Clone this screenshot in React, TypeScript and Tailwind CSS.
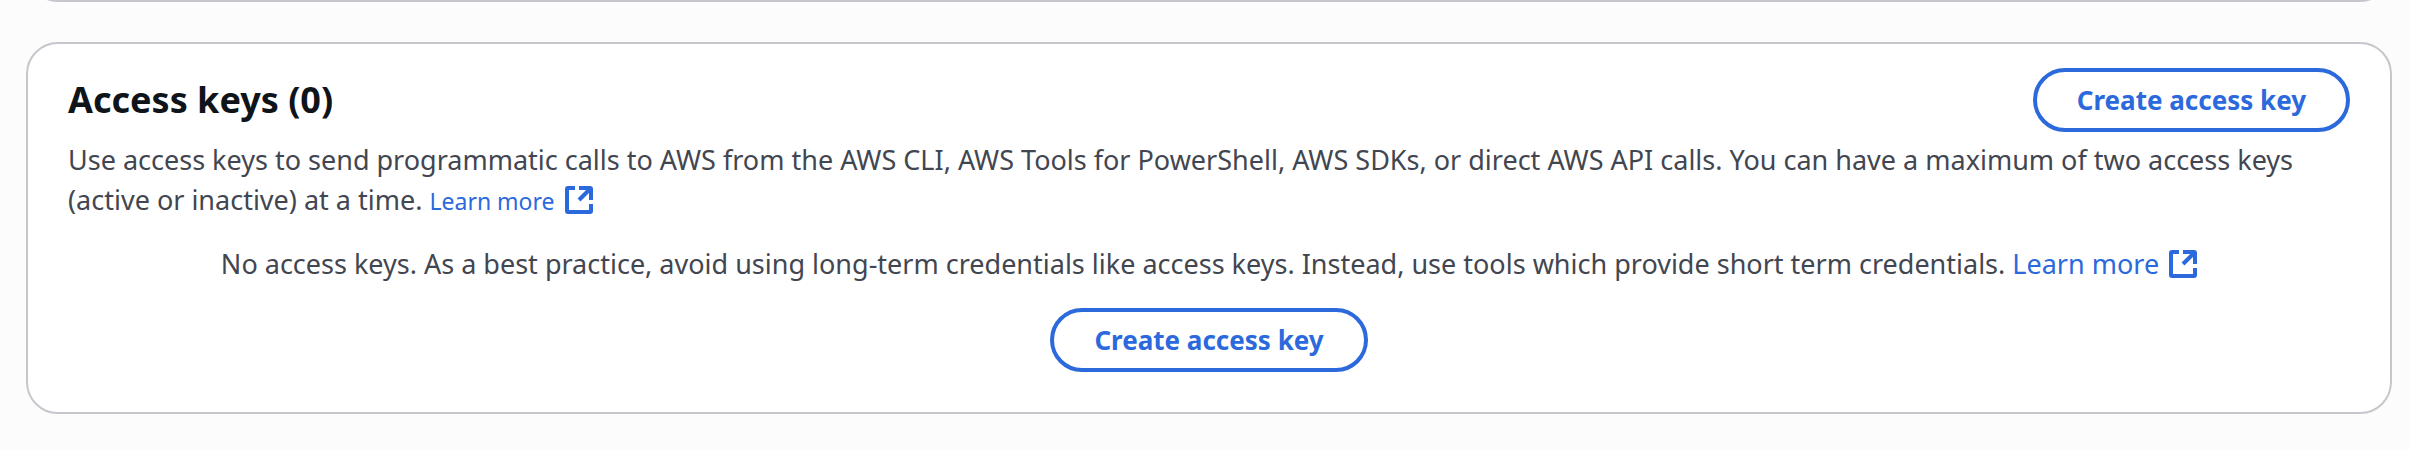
import React from 'react';

function ExternalIcon() {
  return (
    <svg className="ml-2.5 inline-block size-7 align-[-4px]" viewBox="0 0 28 28" fill="none" stroke="currentColor" strokeWidth="4" aria-hidden="true">
      <path d="M10 2H3a1 1 0 0 0-1 1v22a1 1 0 0 0 1 1h22a1 1 0 0 0 1-1v-7" />
      <path d="M14 2h11a1 1 0 0 1 1 1v11" />
      <path d="M25 3 14 14" />
    </svg>
  );
}

function CreateButton() {
  return (
    <button
      type="button"
      className="h-16 shrink-0 rounded-full border-4 border-[#2b69dc] bg-white px-10 text-[26px] font-bold text-[#2b69dc] hover:bg-blue-50"
    >
      Create access key
    </button>
  );
}

export default function App() {
  return (
    <div className="min-h-screen bg-[#fcfcfd] pr-[18px] pb-9 pl-[26px] font-['Noto_Sans','Open_Sans',sans-serif] text-[27px] leading-10 text-[#424650]">
      {/* bottom edge of the previous panel */}
      <div className="flex h-0.5 items-end overflow-hidden">
        <div className="h-20 w-full shrink-0 rounded-[32px] border-2 border-[#c6c6cd] bg-white" />
      </div>

      <section className="mt-10 rounded-[32px] border-2 border-[#c6c6cd] bg-white px-10 pt-6 pb-10">
        <header>
          <div className="flex items-center justify-between">
            <h2 className="text-4xl font-bold text-[#0f141a]">Access keys (0)</h2>
            <CreateButton />
          </div>
          <p className="mt-2">
            Use access keys to send programmatic calls to AWS from the AWS CLI, AWS Tools for PowerShell, AWS SDKs, or
            direct AWS API calls. You can have a maximum of two access keys (active or inactive) at a time.{' '}
            <a href="#learn-more" className="text-[23px] leading-none text-[#2b69dc] hover:underline">
              Learn more
              <ExternalIcon />
            </a>
          </p>
        </header>

        <div className="mt-6 flex flex-col items-center gap-6 text-center">
          <p>
            No access keys. As a best practice, avoid using long-term credentials like access keys. Instead, use tools
            which provide short term credentials.{' '}
            <a href="#credentials" className="text-[#2b69dc] hover:underline">
              Learn more
              <ExternalIcon />
            </a>
          </p>
          <CreateButton />
        </div>
      </section>
    </div>
  );
}
